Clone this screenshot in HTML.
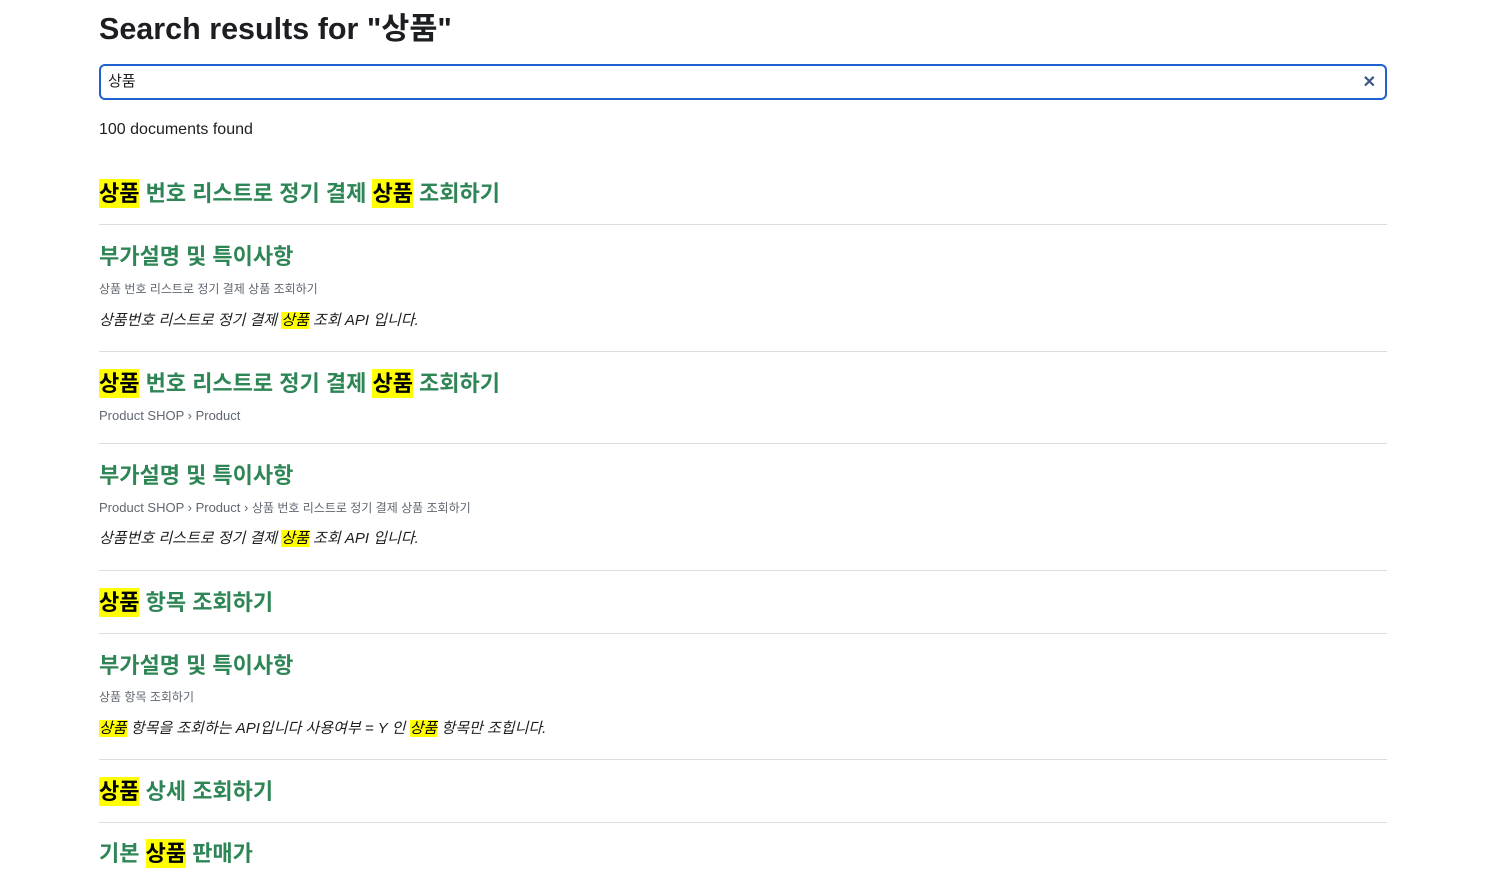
<!DOCTYPE html>
<html><head><meta charset="utf-8"><style>
body{margin:0;background:#fff;font-family:"Liberation Sans","Noto Sans CJK KR",sans-serif;color:#1c1e21;width:1511px;height:868px;overflow:hidden;position:relative}
.a{position:absolute;left:99px;white-space:nowrap}
h1{margin:0;font-size:30.5px;font-weight:700;line-height:40px;top:9px}
.inp{position:absolute;left:99px;top:64px;width:1288px;height:36px;box-sizing:border-box;border:2px solid #1d62d0;border-radius:6px}
.inp span{position:absolute;left:7px;top:6px;font-size:15px;line-height:20px}
.inp b{position:absolute;right:9px;top:7px;color:#3d5484;font-size:16px;line-height:20px}
.cnt{font-size:16px;line-height:20px;top:120px}
.t{font-size:22px;font-weight:700;color:#2e8555;line-height:30px}
.t mark{padding:2px 0}
mark{background:#ff0;color:#000}
.bc{font-size:12px;color:#606770;line-height:16px}
.bc i{font-style:normal;font-size:13px}
.s{font-size:15px;font-style:italic;line-height:20px}
.hr{position:absolute;left:99px;width:1288px;height:1px;background:#dadde1}
</style></head><body>
<h1 class="a">Search results for "상품"</h1>
<div class="inp"><span>상품</span><b>✕</b></div>
<div class="a cnt">100 documents found</div>

<div class="a t" style="top:179px"><mark>상품</mark> 번호 리스트로 정기 결제 <mark>상품</mark> 조회하기</div>
<div class="hr" style="top:224px"></div>
<div class="a t" style="top:242px">부가설명 및 특이사항</div>
<div class="a bc" style="top:281px">상품 번호 리스트로 정기 결제 상품 조회하기</div>
<div class="a s" style="top:311px">상품번호 리스트로 정기 결제 <mark>상품</mark> 조회 API 입니다.</div>
<div class="hr" style="top:351px"></div>
<div class="a t" style="top:369px"><mark>상품</mark> 번호 리스트로 정기 결제 <mark>상품</mark> 조회하기</div>
<div class="a bc" style="top:408px"><i>Product SHOP › Product</i></div>
<div class="hr" style="top:443px"></div>
<div class="a t" style="top:461px">부가설명 및 특이사항</div>
<div class="a bc" style="top:500px"><i>Product SHOP › Product › </i>상품 번호 리스트로 정기 결제 상품 조회하기</div>
<div class="a s" style="top:529px">상품번호 리스트로 정기 결제 <mark>상품</mark> 조회 API 입니다.</div>
<div class="hr" style="top:570px"></div>
<div class="a t" style="top:588px"><mark>상품</mark> 항목 조회하기</div>
<div class="hr" style="top:633px"></div>
<div class="a t" style="top:651px">부가설명 및 특이사항</div>
<div class="a bc" style="top:689px">상품 항목 조회하기</div>
<div class="a s" style="top:719px"><mark>상품</mark> 항목을 조회하는 API입니다 사용여부 = Y 인 <mark>상품</mark> 항목만 조힙니다.</div>
<div class="hr" style="top:759px"></div>
<div class="a t" style="top:777px"><mark>상품</mark> 상세 조회하기</div>
<div class="hr" style="top:822px"></div>
<div class="a t" style="top:839px">기본 <mark>상품</mark> 판매가</div>
</body></html>
